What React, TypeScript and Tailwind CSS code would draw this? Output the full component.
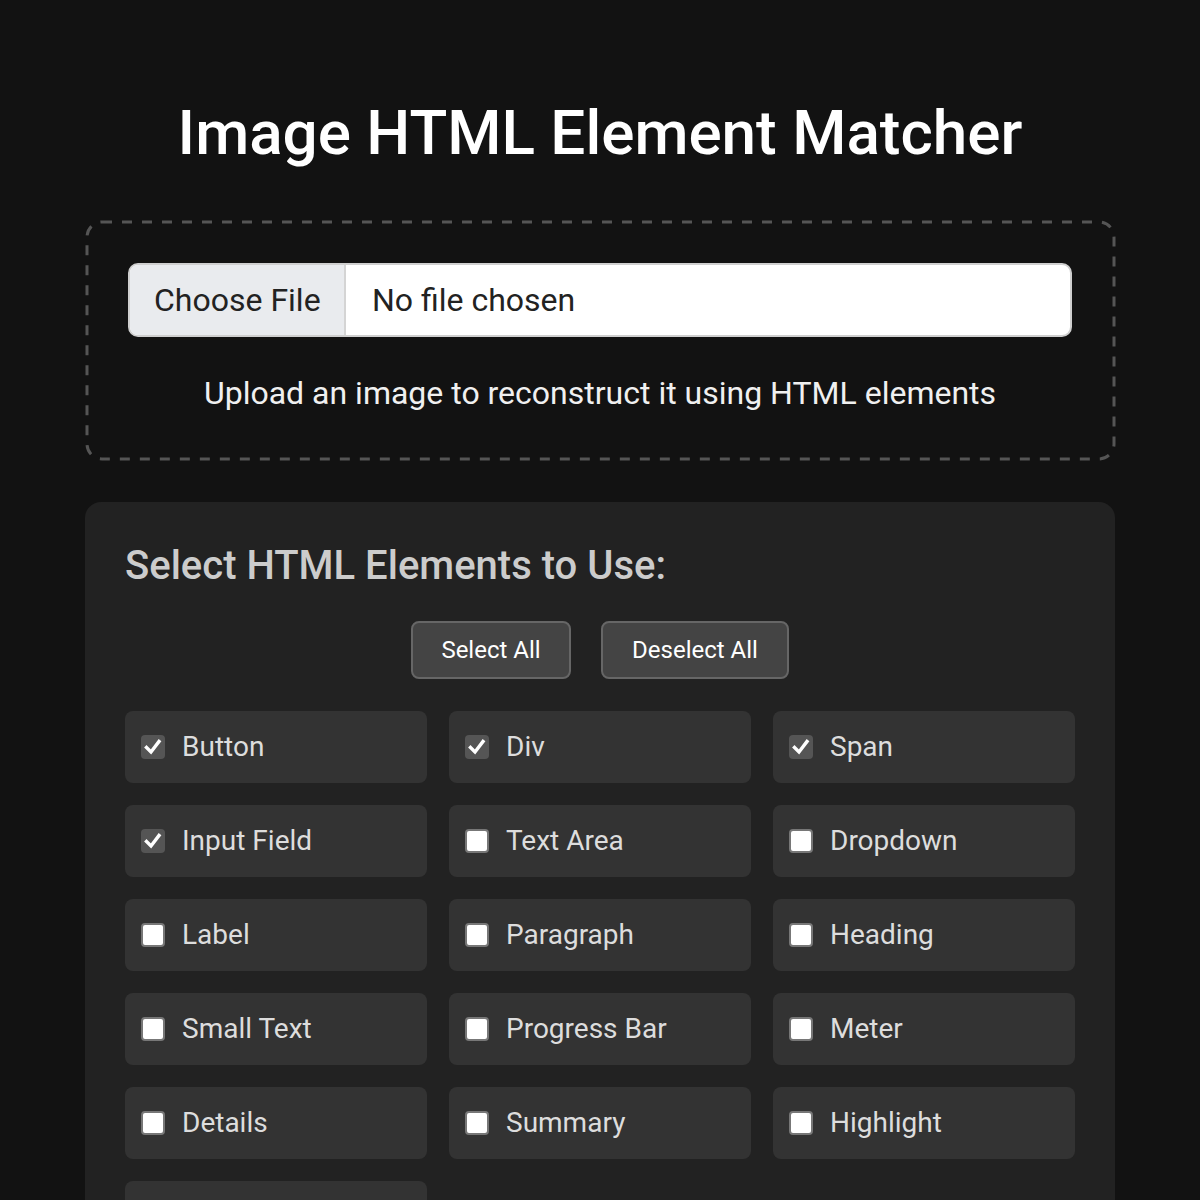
import React from "react";

type Item = { label: string; checked: boolean };

const items: Item[] = [
  { label: "Button", checked: true },
  { label: "Div", checked: true },
  { label: "Span", checked: true },
  { label: "Input Field", checked: true },
  { label: "Text Area", checked: false },
  { label: "Dropdown", checked: false },
  { label: "Label", checked: false },
  { label: "Paragraph", checked: false },
  { label: "Heading", checked: false },
  { label: "Small Text", checked: false },
  { label: "Progress Bar", checked: false },
  { label: "Meter", checked: false },
  { label: "Details", checked: false },
  { label: "Summary", checked: false },
  { label: "Highlight", checked: false },
  { label: "Horizontal Rule", checked: false },
];

function Box({ checked }: { checked: boolean }) {
  if (checked) {
    return (
      <span className="flex h-[24px] w-[24px] shrink-0 items-center justify-center rounded-[4px] bg-[#555555]">
        <svg width="20" height="20" viewBox="0 0 20 20" fill="none">
          <path d="M3.5 10.5 L8 15 L16 4.5" stroke="#ffffff" strokeWidth="3.4" strokeLinecap="square" strokeLinejoin="miter" />
        </svg>
      </span>
    );
  }
  return <span className="h-[24px] w-[24px] shrink-0 rounded-[4px] border-2 border-[#777777] bg-white" />;
}

export default function App() {
  return (
    <div
      className="min-h-[1200px] bg-[#121212] px-[85px] pt-[96px] text-white"
      style={{ fontFamily: "Roboto, 'Noto Sans', sans-serif" }}
    >
      <h1 className="text-center text-[62px] font-medium leading-[74px] text-white">Image HTML Element Matcher</h1>

      {/* upload zone with long-dash outline */}
      <div className="relative mt-[50px] rounded-[16px] border-[3px] border-transparent px-[40px] pt-[40px] pb-[44px]">
        <svg className="pointer-events-none absolute -inset-[1.5px] h-[calc(100%+3px)] w-[calc(100%+3px)] overflow-visible" fill="none">
          <rect
            x="0"
            y="0"
            width="100%"
            height="100%"
            rx="15"
            stroke="#555555"
            strokeWidth="3"
            strokeDasharray="10 10"
          />
        </svg>
        <div className="flex h-[74px] overflow-hidden rounded-[10px] border-2 border-[#cfcfcf] bg-white">
          <div className="flex w-[216px] items-center border-r-2 border-[#d4d4d4] bg-[#e9ebee] pl-[24px] text-[32px] text-[#222222]">
            Choose File
          </div>
          <div className="flex items-center pl-[26px] text-[32px] text-[#222222]">No file chosen</div>
        </div>
        <p className="mt-[36px] text-center text-[32px] leading-[40px] text-[#f0f0f0]">
          Upload an image to reconstruct it using HTML elements
        </p>
      </div>

      <div className="mt-[42px] rounded-t-[16px] bg-[#222222] px-[40px] pt-[40px] pb-[40px]">
        <h2 className="text-[40px] font-medium leading-[48px] text-[#cccccc]">Select HTML Elements to Use:</h2>

        <div className="mt-[31px] flex justify-center gap-[30px]">
          <button className="h-[58px] w-[160px] rounded-[8px] border-2 border-[#666666] bg-[#444444] text-[24px] text-white">
            Select All
          </button>
          <button className="h-[58px] w-[188px] rounded-[8px] border-2 border-[#666666] bg-[#444444] text-[24px] text-white">
            Deselect All
          </button>
        </div>

        <div className="mt-[32px] grid grid-cols-3 gap-[22px]">
          {items.map((it) => (
            <label
              key={it.label}
              className="flex h-[72px] items-center gap-[17px] rounded-[8px] bg-[#333333] px-[16px] text-[28px] text-[#dddddd]"
            >
              <Box checked={it.checked} />
              <span>{it.label}</span>
            </label>
          ))}
        </div>
      </div>
    </div>
  );
}
